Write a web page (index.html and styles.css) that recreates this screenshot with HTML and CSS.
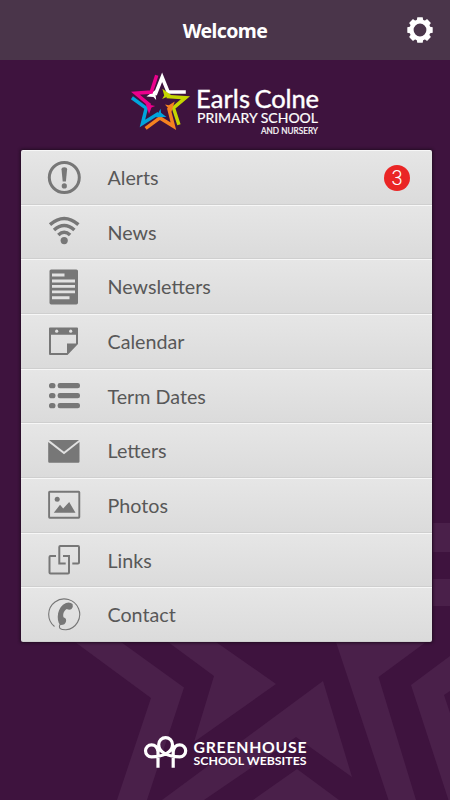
FILE: index.html
```
<!DOCTYPE html>
<html lang="en">
<head>
<meta charset="utf-8">
<title>Earls Colne Primary School</title>
<link rel="stylesheet" href="styles.css">
</head>
<body>
<div class="app">
  <svg class="backdrop" viewBox="0 0 450 800" aria-hidden="true">
    <path d="M433 523H450V552H433ZM433 579H450V606H433ZM75 642H121L184 687.500L147 800H117L151 698ZM168 642H216L276 684L194 742L214 676ZM162 800L323 681L352 777L296 737L204 800ZM297 769L339 800H253ZM336 642H426L378.500 677L416 800H388.500ZM450 656L411 685L448.500 800H450V713L444 695L450 691Z"/>
  </svg>
  <header class="bar">
    <h1 class="title">Welcome</h1>
    <svg class="gear" viewBox="0 0 26 26">
      <circle cx="13" cy="13" r="8.500" fill="none" stroke="#fff" stroke-width="4.200"/>
      <g fill="#fff"><path id="tooth" d="M9.600 4L10.300 0.300H15.700L16.400 4Z"/><use href="#tooth" transform="rotate(45 13 13)"/><use href="#tooth" transform="rotate(90 13 13)"/><use href="#tooth" transform="rotate(135 13 13)"/><use href="#tooth" transform="rotate(180 13 13)"/><use href="#tooth" transform="rotate(225 13 13)"/><use href="#tooth" transform="rotate(270 13 13)"/><use href="#tooth" transform="rotate(315 13 13)"/></g>
    </svg>
  </header>
  <div class="brand">
    <svg width="210" height="90" viewBox="0 0 210 90">
      <defs>
        <g id="ray">
          <path d="M-14 -26L7 -79L25 -35H78" fill="none" stroke="currentColor" stroke-width="10.500"/>
          <path d="M-40 -21L-14 -40L-11 -11L-19 -20Z" fill="currentColor"/>
        </g>
      </defs>
      <g transform="translate(39.800 43.600) scale(.3333)">
        <use href="#ray" color="#fff"/>
        <use href="#ray" color="#c4d600" transform="rotate(72)"/>
        <use href="#ray" color="#f58220" transform="rotate(144)"/>
        <use href="#ray" color="#00a5dc" transform="rotate(216)"/>
        <use href="#ray" color="#ec008c" transform="rotate(288)"/>
      </g>
      <g class="brand-text">
        <text class="brand-name" y="47.600"><tspan x="76" textLength="54">Earls</tspan><tspan x="134.500" textLength="64.500">Colne</tspan></text>
        <text x="77" y="62.600" font-size="14" textLength="121" lengthAdjust="spacingAndGlyphs">PRIMARY SCHOOL</text>
        <text x="141" y="73.500" font-size="8.600" textLength="57" lengthAdjust="spacingAndGlyphs">AND NURSERY</text>
      </g>
    </svg>
  </div>
  <nav class="menu">
    <a class="item"><svg class="icon" viewBox="0 0 36 36"><circle cx="18.300" cy="18.500" r="15" fill="none" stroke="#777" stroke-width="3"/><path d="M15.500 10.300Q15.500 8.200 18.300 8.200T21.100 10.300L19.900 22.500H16.700Z"/><circle cx="18.300" cy="26.900" r="2.600"/></svg><span>Alerts</span><b class="badge">3</b></a>
    <a class="item"><svg class="icon" viewBox="0 0 36 36"><g fill="none" stroke="#777" stroke-width="3.500"><path d="M4 10.600Q18.200 -1.500 32.400 10.600"/><path d="M8 16Q18.200 7 28.400 16"/><path d="M12.300 21Q18.200 15.500 24.100 21"/></g><circle cx="18.200" cy="26.600" r="3.600"/></svg><span>News</span></a>
    <a class="item"><svg class="icon" viewBox="0 0 36 36"><rect x="3.500" y="0.400" width="28.500" height="35" rx="1.700"/><path d="M6 4.600H18.500V7.600H6ZM6 10.600H29V13.400H6ZM6 16H29V18.800H6ZM6 21.500H29V24.300H6ZM6 27.300H23.500V30.300H6Z" fill="#e2e2e2"/></svg><span>Newsletters</span></a>
    <a class="item"><svg class="icon" viewBox="0 0 36 36"><path fill-rule="evenodd" d="M4 4.500H31Q32 4.500 32 5.500V21L21.500 32H4Q3 32 3 31V5.500Q3 4.500 4 4.500ZM5 11.800V30H21V20.500H30V11.800Z"/><g fill="#e2e2e2"><circle cx="10.700" cy="8.200" r="1.600"/><circle cx="24.700" cy="8.200" r="1.600"/></g></svg><span>Calendar</span></a>
    <a class="item"><svg class="icon" viewBox="0 0 36 36"><rect x="3" y="5" width="6.500" height="5.300" rx="2.600"/><rect x="11.600" y="5" width="22.400" height="5.300" rx="2.300"/><rect x="3" y="15" width="6.500" height="5.300" rx="2.600"/><rect x="11.600" y="15" width="22.400" height="5.300" rx="2.300"/><rect x="3" y="25" width="6.500" height="5.300" rx="2.600"/><rect x="11.600" y="25" width="22.400" height="5.300" rx="2.300"/></svg><span>Term Dates</span></a>
    <a class="item"><svg class="icon" viewBox="0 0 36 36"><path d="M3 7H33L18 18.800Z"/><path d="M2.200 9L18 21.300L33.500 9V28.500Q33.500 29.800 32.300 29.800H3.400Q2.200 29.800 2.200 28.500Z"/></svg><span>Letters</span></a>
    <a class="item"><svg class="icon" viewBox="0 0 36 36"><rect x="3.100" y="4.700" width="30.200" height="26" rx=".6" fill="none" stroke="#777" stroke-width="1.900"/><circle cx="11.200" cy="12.300" r="2.500"/><path d="M7.800 25.800L14 17.800L17.200 21.600L23.200 15.100L29.500 25.800Z"/></svg><span>Photos</span></a>
    <a class="item"><svg class="icon" viewBox="0 0 36 36"><g fill="none" stroke="#777" stroke-width="2"><path d="M19.700 21.500H13.300V5Q13.300 4 14.300 4H32Q33 4 33 5V20.500Q33 21.500 32 21.500H26.300"/><path d="M10 14H4.500Q3.500 14 3.500 15V30.500Q3.500 31.500 4.500 31.500H22Q23 31.500 23 30.500V14H17"/></g></svg><span>Links</span></a>
    <a class="item"><svg class="icon" viewBox="0 0 36 36"><path d="M8.500 29.500A15.500 15.500 0 1 1 20 32.800Q11.500 33 14 27.500" fill="none" stroke="#777" stroke-width="1.100"/><path d="M14 28C10 22.500 11 9.500 20 5.900Q24 4.500 26.600 7Q27.500 9.500 25.500 12Q23.500 13.500 20.800 12.100C17.500 14 16.800 17.500 17.500 20.300Q20.800 21.300 20 24.500Q19 28.500 14 28Z"/></svg><span>Contact</span></a>
  </nav>
  <footer class="footer">
    <svg width="170" height="40" viewBox="0 0 170 40">
      <g fill="none" stroke="#fff" stroke-width="3.200">
        <path d="M17 32.700V16.500Q16 9.800 10.500 9.800A5.900 5.900 0 0 0 10.500 21.800C21 21.800 31.500 18 31.500 9.500A6.900 6.900 0 0 0 17.700 9.500C17.700 18 28 21.800 38.700 21.800A5.900 5.900 0 0 0 38.700 9.800Q33.200 9.800 32.200 16.500V32.700"/>
      </g>
      <g class="footer-text">
        <text x="52.500" y="17.900" font-size="15.800" textLength="113">GREENHOUSE</text>
        <text x="52.500" y="30.400" font-size="11.500" textLength="113" lengthAdjust="spacingAndGlyphs">SCHOOL WEBSITES</text>
      </g>
    </svg>
  </footer>
</div>
</body>
</html>
```

FILE: styles.css
```
body {
  margin: 0;
  background: #3e133e;
}
.app {
  position: relative;
  width: 450px;
  height: 800px;
  overflow: hidden;
  display: flex;
  flex-direction: column;
  font-family: Lato, "Liberation Sans", sans-serif;
}
.backdrop {
  position: absolute;
  inset: 0;
  fill: #4a204a;
}
.bar, .brand, .menu, .footer {
  position: relative;
}
.bar {
  height: 60px;
  box-sizing: border-box;
  background: #4a354a;
  display: grid;
  grid-template-columns: 1fr auto 1fr;
  align-items: center;
  padding: 2px 17px 0;
}
.title {
  grid-column: 2;
  margin: 0;
  font: 700 19.5px/28px "Noto Sans", "Open Sans", sans-serif;
  letter-spacing: -0.6px;
  color: #fff;
}
.gear {
  width: 26px;
  height: 26px;
  justify-self: end;
  margin-top: -3px;
}
.brand {
  height: 90px;
  padding-left: 120px;
}
.brand svg, .footer svg {
  display: block;
}
.brand-text {
  fill: #fff;
  stroke: #fff;
  stroke-width: 0.2;
}
.brand-name {
  font-size: 25.5px;
  stroke-width: 0.4;
}
.menu {
  width: 411px;
  height: 492px;
  margin-left: 21px;
  display: grid;
  grid-template-rows: repeat(9, 1fr);
  border-radius: 2px;
  overflow: hidden;
  box-shadow: 0 0 3px 1px #220d22;
}
.item {
  display: flex;
  align-items: center;
  padding: 0 22px 0 25px;
  background: linear-gradient(#e6e6e6, #dbdbdb);
  box-sizing: border-box;
  border-top: 1px solid #f7f7f7;
  border-bottom: 1px solid #cfcfcf;
  color: #585858;
  font-size: 19.7px;
  line-height: 28px;
}
.item span {
  padding-top: 1.4px;
}
.icon {
  width: 36px;
  height: 36px;
  margin-right: 25.5px;
  fill: #777;
}
.badge {
  margin: 2px 0 0 auto;
  width: 26px;
  height: 26px;
  border-radius: 50%;
  background: #ea2525;
  color: #fff;
  font-family: Roboto, sans-serif;
  font-size: 20px;
  font-weight: 300;
  line-height: 27px;
  text-align: center;
}
.footer {
  margin-top: 93px;
  padding-left: 141px;
}
.footer-text {
  fill: #fff;
  font-weight: 700;
}
```
